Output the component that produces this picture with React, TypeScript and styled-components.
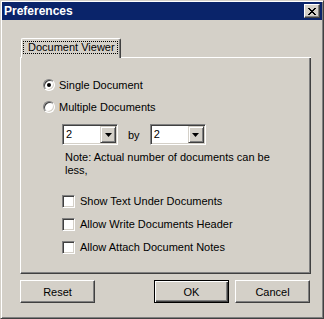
import React from 'react';
import styled, { createGlobalStyle } from 'styled-components';

const GlobalStyle = createGlobalStyle`
  html, body {
    margin: 0;
    padding: 0;
    background: #d4d0c8;
  }
  body {
    font-family: 'Liberation Sans', Arial, sans-serif;
    font-size: 11px;
    color: #000;
  }
`;

const FACE = '#d4d0c8';

const Window = styled.div`
  box-sizing: border-box;
  width: 324px;
  height: 319px;
  padding: 1px;
  background: ${FACE};
  border: 1px solid;
  border-color: ${FACE} #404040 #404040 ${FACE};
  box-shadow: inset 1px 1px #fff, inset -1px -1px #808080;
  display: flex;
  flex-direction: column;
`;

const TitleBar = styled.div`
  height: 18px;
  background: #0a246a;
  color: #fff;
  display: flex;
  align-items: center;
  justify-content: space-between;
  padding: 0 2px 0 2px;
`;

const Title = styled.span`
  font-weight: bold;
  font-size: 12px;
  line-height: 18px;
`;

const CloseButton = styled.div`
  box-sizing: border-box;
  width: 16px;
  height: 14px;
  background: ${FACE};
  border: 1px solid;
  border-color: #fff #404040 #404040 #fff;
  box-shadow: inset -1px -1px #808080;
  display: flex;
  align-items: center;
  justify-content: center;
`;

const Body = styled.div`
  flex: 1;
  display: flex;
  flex-direction: column;
  padding: 18px 11px 12px 18px;
`;

const TabStrip = styled.div`
  height: 20px;
  display: flex;
  align-items: stretch;
`;

const TabGap = styled.div<{ grow?: boolean }>`
  width: 1px;
  flex: ${(p) => (p.grow ? 1 : 'none')};
  border-bottom: 1px solid #fff;
`;

const Tab = styled.div`
  box-sizing: border-box;
  border-top: 1px solid #fff;
  border-left: 1px solid #fff;
  border-right: 1px solid #404040;
  box-shadow: inset -1px 0 #808080;
  border-top-left-radius: 2px;
  border-top-right-radius: 2px;
  padding: 2px 2px 0 1px;
`;

const TabLabel = styled.div`
  border: 1px dotted #000;
  height: 11px;
  line-height: 11px;
  padding: 0 2px 0 4px;
  white-space: nowrap;
`;

const Panel = styled.div`
  box-sizing: border-box;
  height: 216px;
  border-left: 1px solid #fff;
  border-right: 1px solid #404040;
  border-bottom: 1px solid #404040;
  box-shadow: inset -1px -1px #808080;
  padding: 19px 0 0 22px;
  display: flex;
  flex-direction: column;
`;

const OptionRow = styled.label<{ gap?: number }>`
  display: flex;
  align-items: center;
  height: 16px;
  gap: 4px;
  margin-top: ${(p) => p.gap ?? 0}px;
  white-space: nowrap;
`;

const Radio = styled.span<{ checked?: boolean }>`
  box-sizing: border-box;
  width: 12px;
  height: 12px;
  border-radius: 50%;
  background: #fff;
  border: 1px solid;
  border-color: #808080 #fff #fff #808080;
  box-shadow: inset 1px 1px #404040, inset -1px -1px ${FACE};
  display: flex;
  align-items: center;
  justify-content: center;
  &::after {
    content: '';
    display: ${(p) => (p.checked ? 'block' : 'none')};
    width: 4px;
    height: 4px;
    border-radius: 50%;
    background: #000;
  }
`;

const Indent = styled.div`
  padding-left: 19px;
  display: flex;
  flex-direction: column;
`;

const ComboRow = styled.div`
  display: flex;
  align-items: center;
  gap: 10px;
  margin-top: 9px;
`;

const Combo = styled.div`
  box-sizing: border-box;
  width: 56px;
  height: 21px;
  background: #fff;
  border: 1px solid;
  border-color: #808080 #fff #fff #808080;
  box-shadow: inset 1px 1px #404040, inset -1px -1px ${FACE};
  display: flex;
  align-items: stretch;
  padding: 1px;
`;

const ComboValue = styled.span`
  flex: 1;
  line-height: 17px;
  padding-left: 2px;
`;

const ComboButton = styled.span`
  box-sizing: border-box;
  width: 16px;
  background: ${FACE};
  border: 1px solid;
  border-color: ${FACE} #404040 #404040 ${FACE};
  box-shadow: inset 1px 1px #fff, inset -1px -1px #808080;
  display: flex;
  align-items: center;
  justify-content: center;
`;

const Note = styled.p`
  margin: 6px 0 0 3px;
  line-height: 13px;
  width: 210px;
`;

const Checkbox = styled.span`
  box-sizing: border-box;
  width: 13px;
  height: 13px;
  background: #fff;
  border: 1px solid;
  border-color: #808080 #fff #fff #808080;
  box-shadow: inset 1px 1px #404040, inset -1px -1px ${FACE};
`;

const CheckRow = styled(OptionRow)`
  gap: 5px;
`;

const ButtonRow = styled.div`
  display: flex;
  margin-top: 6px;
  gap: 6px;
  padding-right: 1px;
`;

const Button = styled.button<{ isDefault?: boolean }>`
  box-sizing: border-box;
  width: 75px;
  height: 23px;
  padding: 0;
  font-family: 'Liberation Sans', Arial, sans-serif;
  font-size: 11px;
  color: #000;
  background: ${FACE};
  border: 1px solid;
  border-color: ${(p) =>
    p.isDefault ? '#000' : `#fff #404040 #404040 #fff`};
  box-shadow: ${(p) =>
    p.isDefault
      ? 'inset 1px 1px #fff, inset -1px -1px #404040, inset -2px -2px #808080'
      : 'inset -1px -1px #808080'};
`;

const Spacer = styled.div`
  flex: 1;
`;

function CloseIcon() {
  return (
    <svg width="8" height="7" viewBox="0 0 8 7">
      <path d="M0 0h2v1h1v1h2v-1h1v-1h2v1h-1v1h-1v1h-1v1h1v1h1v1h1v1h-2v-1h-1v-1h-2v1h-1v1h-2v-1h1v-1h1v-1h1v-1h-1v-1h-1v-1h-1z" fill="#000" />
    </svg>
  );
}

function Arrow() {
  return (
    <svg width="7" height="4" viewBox="0 0 7 4">
      <path d="M0 0h7l-3.5 4z" fill="#000" />
    </svg>
  );
}

function ComboBox({ value }: { value: string }) {
  return (
    <Combo>
      <ComboValue>{value}</ComboValue>
      <ComboButton>
        <Arrow />
      </ComboButton>
    </Combo>
  );
}

const checks = [
  'Show Text Under Documents',
  'Allow Write Documents Header',
  'Allow Attach Document Notes',
];

export default function App() {
  return (
    <>
      <GlobalStyle />
      <Window>
        <TitleBar>
          <Title>Preferences</Title>
          <CloseButton>
            <CloseIcon />
          </CloseButton>
        </TitleBar>
        <Body>
          <TabStrip>
            <TabGap />
            <Tab>
              <TabLabel>Document Viewer</TabLabel>
            </Tab>
            <TabGap grow />
          </TabStrip>
          <Panel>
            <OptionRow>
              <Radio checked />
              Single Document
            </OptionRow>
            <OptionRow gap={6}>
              <Radio />
              Multiple Documents
            </OptionRow>
            <Indent>
              <ComboRow>
                <ComboBox value="2" />
                <span>by</span>
                <ComboBox value="2" />
              </ComboRow>
              <Note>Note: Actual number of documents can be less,</Note>
              {checks.map((label, i) => (
                <CheckRow key={label} gap={i === 0 ? 16 : 7}>
                  <Checkbox />
                  {label}
                </CheckRow>
              ))}
            </Indent>
          </Panel>
          <ButtonRow>
            <Button>Reset</Button>
            <Spacer />
            <Button isDefault>OK</Button>
            <Button>Cancel</Button>
          </ButtonRow>
        </Body>
      </Window>
    </>
  );
}
